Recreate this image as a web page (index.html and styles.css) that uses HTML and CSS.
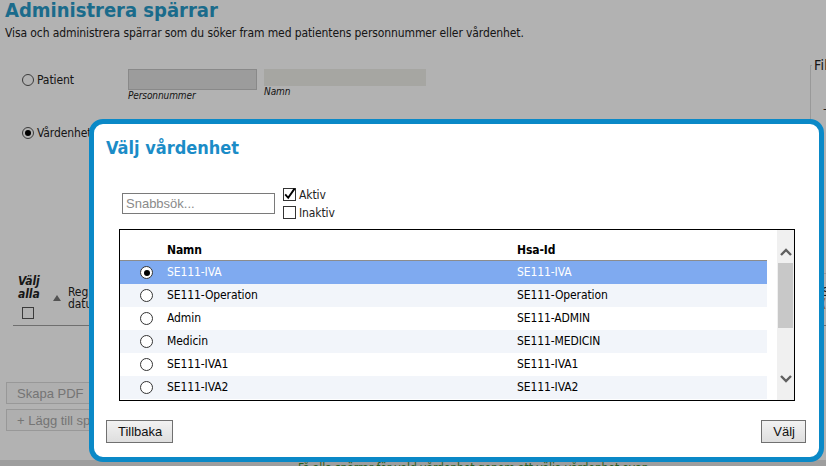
FILE: index.html
```html
<!DOCTYPE html>
<html lang="sv">
<head>
<meta charset="utf-8">
<title>Administrera spärrar</title>
<link rel="stylesheet" href="styles.css">
</head>
<body>
<div class="page">
  <header class="head">
    <h1 class="title">Administrera spärrar</h1>
    <p class="intro">Visa och administrera spärrar som du söker fram med patientens personnummer eller vårdenhet.</p>
  </header>

  <section class="search">
    <div class="search-left">
      <div class="opt-row">
        <label class="opt"><span class="radio"></span><span>Patient</span></label>
        <div class="field"><div class="box box-pnr"></div><span class="cap">Personnummer</span></div>
        <div class="field"><div class="box box-name"></div><span class="cap">Namn</span></div>
      </div>
      <div class="opt-row opt-row-unit">
        <label class="opt"><span class="radio radio-on"></span><span>Vårdenhet</span></label>
      </div>
    </div>
    <fieldset class="filter">
      <legend class="filter-legend">Filtrera</legend>
      <div class="filter-item">– Alla</div>
    </fieldset>
  </section>

  <section class="results">
    <div class="res-head">
      <div class="rh-select"><span class="rh-label">Välj<br>alla</span><span class="pcb"></span></div>
      <div class="rh-date"><span class="sort-up"></span><span class="rh-text">Reg.<br>datum</span></div>
      <div class="rh-col"></div>
      <div class="rh-col"></div>
      <div class="rh-col"></div>
      <div class="rh-status">Spärr-<br><span class="rh-warn">(</span>status</div>
    </div>
  </section>

  <div class="actions">
    <button class="page-btn" type="button">Skapa PDF</button>
    <button class="page-btn" type="button">+ Lägg till spärr</button>
  </div>

  <div class="footer-msg">Få alla spärrar för vald vårdenhet genom att välja vårdenhet ovan.</div>
</div>

<div class="overlay"></div>

<div class="modal" role="dialog" aria-label="Välj vårdenhet">
  <h2 class="modal-title">Välj vårdenhet</h2>

  <div class="filter-row">
    <input class="quick" type="text" placeholder="Snabbsök...">
    <div class="states">
      <label class="state"><span class="cb cb-on"><svg width="13" height="13" viewBox="0 0 13 13"><path d="M2.2 6.4 L5.2 9.8 L11.6 0.6" fill="none" stroke="#000" stroke-width="1.9"/></svg></span><span class="state-text">Aktiv</span></label>
      <label class="state"><span class="cb"></span><span class="state-text">Inaktiv</span></label>
    </div>
  </div>

  <div class="grid-box">
    <div class="list">
      <div class="list-head"><span></span><span>Namn</span><span>Hsa-Id</span></div>
      <div class="row row-sel"><span class="rcell"><span class="rb rb-on"></span></span><span>SE111-IVA</span><span>SE111-IVA</span></div>
      <div class="row row-alt"><span class="rcell"><span class="rb"></span></span><span>SE111-Operation</span><span>SE111-Operation</span></div>
      <div class="row"><span class="rcell"><span class="rb"></span></span><span>Admin</span><span>SE111-ADMIN</span></div>
      <div class="row row-alt"><span class="rcell"><span class="rb"></span></span><span>Medicin</span><span>SE111-MEDICIN</span></div>
      <div class="row"><span class="rcell"><span class="rb"></span></span><span>SE111-IVA1</span><span>SE111-IVA1</span></div>
      <div class="row row-alt"><span class="rcell"><span class="rb"></span></span><span>SE111-IVA2</span><span>SE111-IVA2</span></div>
      <div class="row"><span class="rcell"><span class="rb"></span></span><span>SE111-IVA3</span><span>SE111-IVA3</span></div>
      <div class="row row-alt"><span class="rcell"><span class="rb"></span></span><span>Kirurgi</span><span>SE111-KIR</span></div>
    </div>
    <div class="vscroll">
      <div class="sb-up"><svg width="12" height="8" viewBox="0 0 12 8"><polyline points="1,7 6,2 11,7" fill="none" stroke="#606060" stroke-width="2.4"/></svg></div>
      <div class="sb-thumb"></div>
      <div class="sb-track"></div>
      <div class="sb-down"><svg width="12" height="8" viewBox="0 0 12 8"><polyline points="1,1 6,6 11,1" fill="none" stroke="#606060" stroke-width="2.4"/></svg></div>
    </div>
  </div>

  <div class="modal-actions">
    <button class="btn" type="button">Tillbaka</button>
    <button class="btn" type="button">Välj</button>
  </div>
</div>
</body>
</html>
```

FILE: styles.css
```css
* { box-sizing: border-box; }

html, body {
  margin: 0;
  padding: 0;
  width: 826px;
  height: 466px;
  overflow: hidden;
}

body {
  font-family: "DejaVu Sans Condensed", "DejaVu Sans", sans-serif;
  font-stretch: condensed;
  font-size: 12px;
  letter-spacing: -0.1px;
  color: #222;
  background: #fff;
  position: relative;
}

/* ---------- background page ---------- */
.page {
  width: 1000px;
  height: 466px;
  padding: 0 5px;
  display: flex;
  flex-direction: column;
}

.title {
  margin: 0;
  font-size: 20px;
  line-height: 20px;
  font-weight: bold;
  letter-spacing: 0;
  color: #289ac8;
}

.intro {
  margin: 6px 0 0;
  line-height: 15px;
}

.search {
  display: flex;
  margin-top: 17px;
  height: 216px;
}

.search-left {
  flex: 0 0 805px;
  padding: 11px 0 0 17px;
}

.opt-row {
  display: flex;
  align-items: flex-start;
}

.opt-row-unit { margin-top: 20px; }

.opt {
  display: flex;
  align-items: center;
  gap: 3px;
  width: 106px;
  margin-top: 5px;
  line-height: 12px;
}

.radio {
  width: 12px;
  height: 12px;
  border: 1px solid #555;
  border-radius: 50%;
  background: #fff;
  display: flex;
  align-items: center;
  justify-content: center;
}

.radio-on::after {
  content: "";
  width: 6px;
  height: 6px;
  border-radius: 50%;
  background: #000;
}

.field {
  display: flex;
  flex-direction: column;
  margin-right: 7px;
}

.box-pnr {
  width: 129px;
  height: 21px;
  background: #e0e0e0;
  border: 1px solid #c5c5c5;
}

.box-name {
  width: 162px;
  height: 17px;
  background: #eeeee8;
}

.cap {
  font-size: 10px;
  font-style: italic;
  line-height: 12px;
}

.filter {
  flex: 0 0 190px;
  margin: 0;
  padding: 0 0 0 1px;
  height: 216px;
  border: 1px solid #dcdcdc;
  border-right: 0;
}

.filter-legend {
  padding: 0 1px 0 2px;
  font-size: 14px;
  line-height: 14px;
  letter-spacing: 0.3px;
}

.filter-item {
  margin-top: 30px;
  padding-left: 11px;
}

.results {
  margin-left: 8px;
}

.res-head {
  display: grid;
  grid-template-columns: 40px 180px 120px 160px 309px 1fr;
  border-bottom: 1px solid #a0a0a0;
  height: 52px;
  padding-top: 1px;
}

.rh-select {
  display: flex;
  flex-direction: column;
  padding-left: 5px;
}

.rh-label {
  font-style: italic;
  font-weight: bold;
  line-height: 13px;
}

.pcb {
  width: 12px;
  height: 12px;
  margin: 6px 0 0 4px;
  border: 1px solid #555;
  background: #fff;
}

.rh-date {
  display: flex;
  align-items: flex-start;
  gap: 7px;
  padding-top: 11px;
}

.sort-up {
  margin-top: 9px;
  width: 0;
  height: 0;
  border-left: 4.5px solid transparent;
  border-right: 4.5px solid transparent;
  border-bottom: 6px solid #777;
}

.rh-text, .rh-col, .rh-status { line-height: 12px; }
.rh-col, .rh-status { padding-top: 11px; }
.rh-warn { color: #c87a1e; }

.actions {
  display: flex;
  flex-direction: column;
  align-items: flex-start;
  gap: 5px;
  margin: 56px 0 0 1px;
}

.page-btn {
  font-family: "Liberation Sans", Arial, sans-serif;
  font-size: 13px;
  line-height: 15px;
  height: 22px;
  padding: 2px 10px;
  border: 1px solid #dadada;
  background: #fbfbfb;
  color: #a8a8a8;
}

.footer-msg {
  margin: 29px -5px 0;
  height: 30px;
  background: #e3e3e3;
  color: #3c852b;
  padding: 2px 0 0 298px;
  line-height: 12px;
}

/* ---------- overlay + modal ---------- */
.overlay {
  position: fixed;
  inset: 0;
  background: rgba(0, 0, 0, 0.3);
  z-index: 1;
}

.modal {
  position: absolute;
  left: 89px;
  top: 119px;
  width: 735px;
  height: 343px;
  z-index: 2;
  background: #fff;
  border: 5px solid #0a89c7;
  border-radius: 14px;
  padding: 13px 13px 0 12px;
  display: flex;
  flex-direction: column;
}

.modal-title {
  margin: 0;
  font-size: 18px;
  line-height: 22px;
  font-weight: bold;
  letter-spacing: 0;
  color: #1b8cc7;
}

.filter-row {
  display: flex;
  align-items: flex-start;
  gap: 8px;
  margin: 29px 0 0 16px;
}

.quick {
  width: 153px;
  height: 21px;
  margin-top: 5px;
  padding: 0 3px;
  border: 1px solid #7a7a7a;
  font-family: "Liberation Sans", Arial, sans-serif;
  font-size: 13px;
  letter-spacing: 0;
  color: #222;
  outline: none;
}

.quick::placeholder { color: #8a8a8a; }

.states {
  display: flex;
  flex-direction: column;
}

.state {
  display: flex;
  align-items: flex-start;
  gap: 3px;
  height: 18px;
}

.cb {
  width: 13px;
  height: 13px;
  border: 1px solid #333;
  background: #fff;
  position: relative;
}

.cb svg {
  position: absolute;
  left: -1px;
  top: -1px;
}

.state-text {
  line-height: 13px;
  padding-top: 1px;
}

.grid-box {
  display: flex;
  width: 676px;
  height: 172px;
  margin: 5px 0 0 13px;
  border: 1px solid #000;
  overflow: hidden;
}

.list {
  width: 657px;
  padding-right: 10px;
  overflow: hidden;
}

.list-head {
  display: grid;
  grid-template-columns: 47px 350px 1fr;
  align-items: end;
  height: 31px;
  padding-bottom: 2px;
  border-bottom: 1px solid #8c8c8c;
  font-weight: bold;
  color: #000;
  line-height: 15px;
}

.row {
  display: grid;
  grid-template-columns: 47px 350px 1fr;
  align-items: center;
  height: 23px;
  line-height: 23px;
  color: #000;
  background: #fff;
}

.row-alt { background: #f2f5fa; }
.row-sel { background: #7faaf0; color: #fff; }

.rcell {
  display: flex;
  align-items: center;
  padding-left: 20px;
}

.rb {
  width: 13px;
  height: 13px;
  border: 1px solid #333;
  border-radius: 50%;
  background: #fff;
  display: flex;
  align-items: center;
  justify-content: center;
}

.rb-on::after {
  content: "";
  width: 6px;
  height: 6px;
  border-radius: 50%;
  background: #000;
}

.vscroll {
  width: 17px;
  background: #f0f0f0;
  display: flex;
  flex-direction: column;
}

.sb-up {
  height: 33px;
  display: flex;
  align-items: flex-end;
  justify-content: center;
  padding-bottom: 7px;
}

.sb-thumb {
  height: 65px;
  margin: 0 1px;
  background: #c8c8c8;
}

.sb-track { flex: 1; }

.sb-down {
  height: 25px;
  display: flex;
  align-items: flex-start;
  justify-content: center;
}

.modal-actions {
  display: flex;
  justify-content: space-between;
  margin-top: 19px;
}

.btn {
  font-family: "Liberation Sans", Arial, sans-serif;
  font-size: 13px;
  line-height: 15px;
  letter-spacing: 0;
  height: 23px;
  padding: 3px 10px 3px 11px;
  border: 1px solid #707070;
  background: linear-gradient(#f2f2f2, #dedede);
  color: #111;
}
```
